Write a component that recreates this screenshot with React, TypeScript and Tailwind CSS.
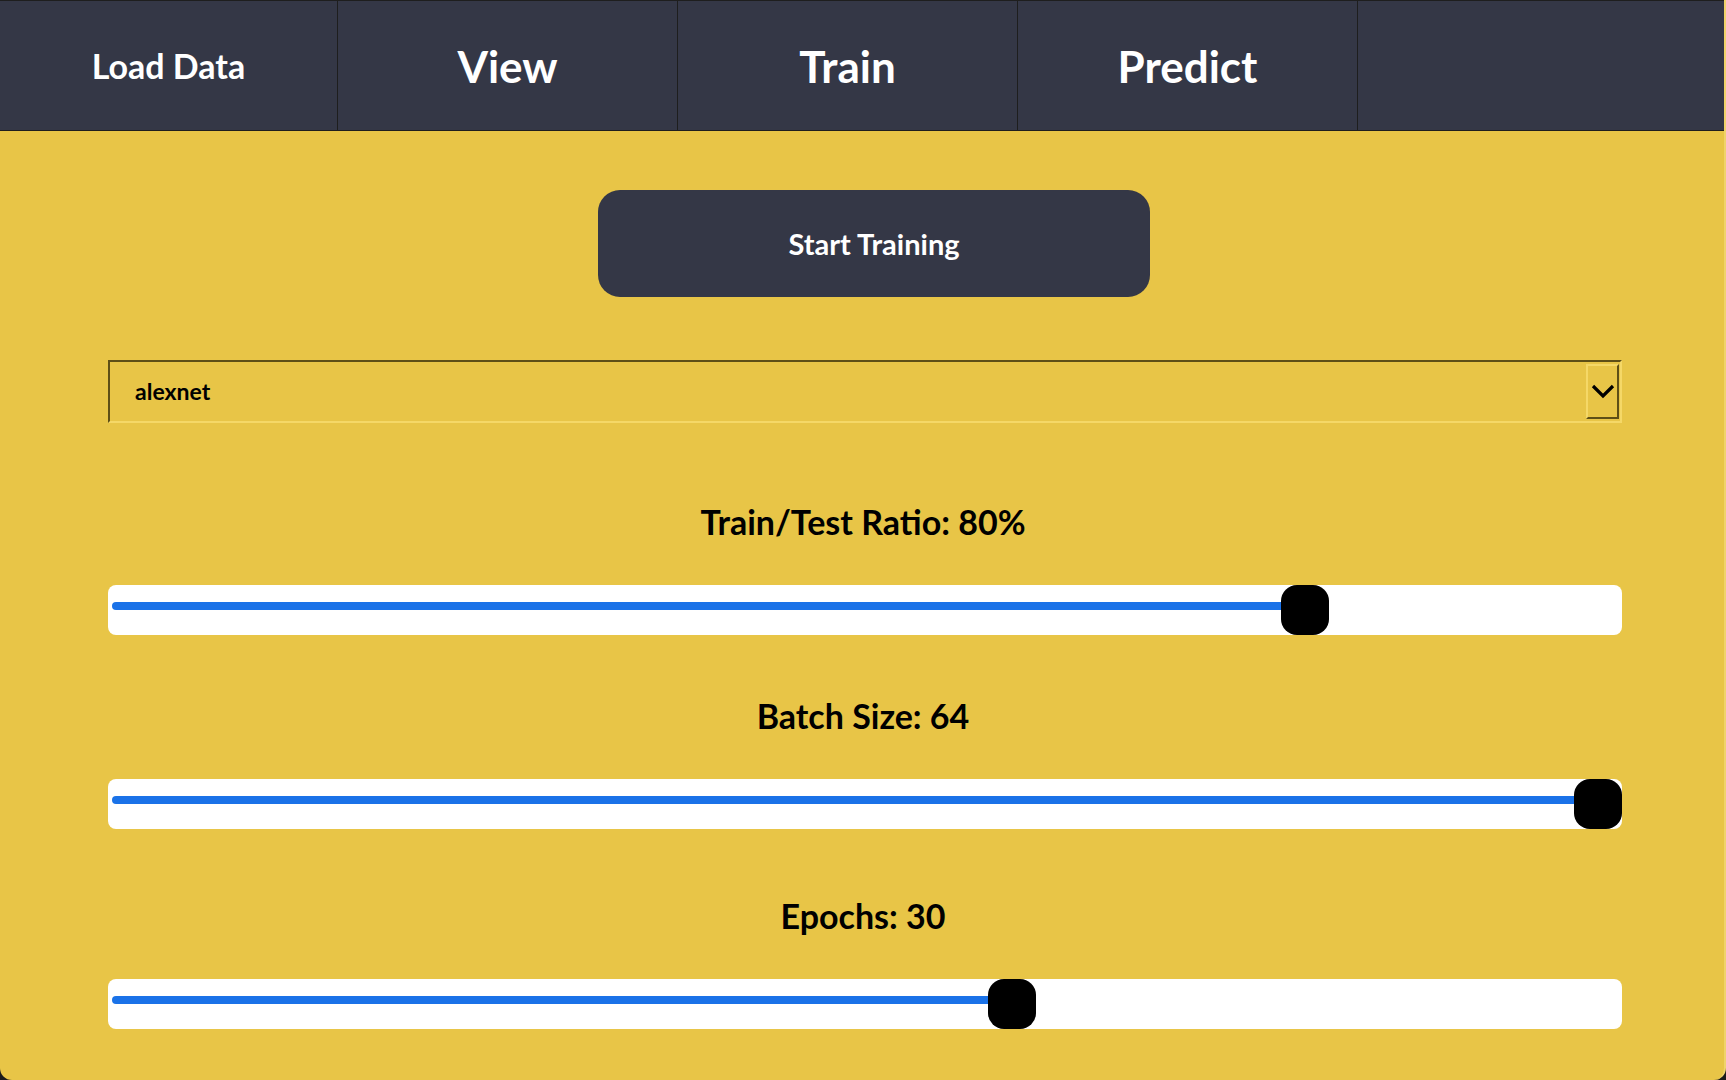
import React, { useState } from 'react';

const tabs = ['Load Data', 'View', 'Train', 'Predict'];

interface RangeProps {
    label: string;
    value: number;
    min: number;
    max: number;
    className?: string;
}

// track with a blue fill up to the thumb, thumb is as tall as the track
const Range: React.FC<RangeProps> = ({ label, value, min, max, className }) => {
    const pct = (value - min) / (max - min);
    return (
        <div className={`flex flex-col ${className ?? ''}`}>
            <div className="h-[38px] flex items-center justify-center text-[34px] font-bold text-black leading-none pr-[4px]">
                {label}
            </div>
            <div className="mt-[44px] relative h-[50px] bg-white rounded-[8px]">
                <div className="absolute left-[4px] right-[48px] top-[17px] h-[8px]">
                    <div
                        className="h-full bg-[#1a72e8] rounded-l-full"
                        style={{ width: `${pct * 100}%` }}
                    />
                </div>
                <div className="absolute inset-y-0 left-0 right-[48px]">
                    <div
                        className="absolute top-0 w-[48px] h-[50px] bg-black rounded-[16px]"
                        style={{ left: `${pct * 100}%` }}
                    />
                </div>
            </div>
        </div>
    );
};

export default function App() {
    const [model] = useState('alexnet');

    return (
        <div
            className="min-h-screen bg-[#1b1b1b]"
            style={{ fontFamily: '"Lato", "Noto Sans", sans-serif' }}
        >
            <div className="h-[1080px] bg-[#e8c547] rounded-b-[12px] overflow-hidden flex flex-col border-r-2 border-r-[#f0d36a]">
                {/* tabs */}
                <div className="h-[131px] bg-[#343746] border-t border-t-[#1e1e1e] border-b border-b-[#1e1e1e] flex shrink-0">
                    {tabs.map((t, i) => (
                        <div
                            key={t}
                            className={`h-full flex items-center justify-center text-white font-bold border-r border-r-[#1e1e1e] ${
                                i === 0 ? 'w-[338px] text-[34px]' : 'w-[340px] text-[44px]'
                            }`}
                        >
                            {t}
                        </div>
                    ))}
                    <div className="flex-1" />
                </div>

                <div className="flex flex-col pl-[108px] pr-[102px] pt-[59px]">
                    <div className="flex">
                        <button className="ml-[490px] w-[552px] h-[107px] bg-[#343746] rounded-[22px] text-white text-[29px] font-bold">
                            Start Training
                        </button>
                    </div>

                    {/* model select */}
                    <div className="mt-[63px] h-[63px] flex items-center border-2 border-t-[#5e4f16] border-l-[#5e4f16] border-b-[#f5d867] border-r-[#f5d867] pl-[25px] pr-[1px]">
                        <span className="flex-1 text-[23px] font-bold text-black">{model}</span>
                        <div className="w-[33px] h-[55px] flex items-center justify-center border-2 border-t-[#f5d867] border-l-[#f5d867] border-b-[#5e4f16] border-r-[#5e4f16]">
                            <svg width="24" height="15" viewBox="0 0 24 15" fill="none">
                                <path d="M2 2 L12 12 L22 2" stroke="black" strokeWidth="3.2" />
                            </svg>
                        </div>
                    </div>

                    <div className="mt-[80px] flex flex-col">
                        <Range label="Train/Test Ratio: 80%" value={80} min={0} max={100} />
                        <Range className="mt-[62px]" label="Batch Size: 64" value={64} min={1} max={64} />
                        <Range className="mt-[68px]" label="Epochs: 30" value={30} min={0} max={50} />
                    </div>
                </div>
            </div>
        </div>
    );
}
